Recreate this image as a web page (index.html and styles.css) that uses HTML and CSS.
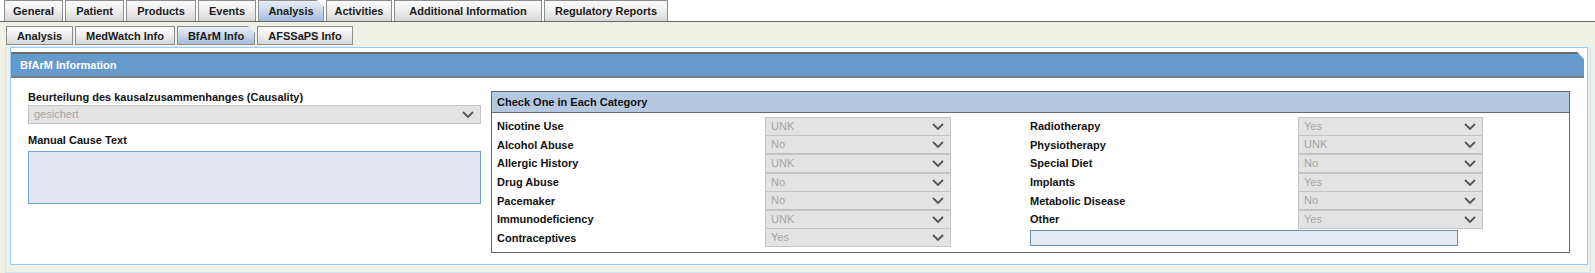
FILE: index.html
```html
<!DOCTYPE html>
<html>
<head>
<meta charset="utf-8">
<link rel="stylesheet" href="styles.css">
</head>
<body>
<div class="tabs1">
  <div class="tab">General</div>
  <div class="tab">Patient</div>
  <div class="tab">Products</div>
  <div class="tab">Events</div>
  <div class="tab sel">Analysis</div>
  <div class="tab">Activities</div>
  <div class="tab">Additional Information</div>
  <div class="tab">Regulatory Reports</div>
</div>
<div class="frame">
  <div class="tabs2">
    <div class="tab">Analysis</div>
    <div class="tab">MedWatch Info</div>
    <div class="tab sel">BfArM Info</div>
    <div class="tab">AFSSaPS Info</div>
  </div>
  <div class="outer">
    <div class="panel">
      <div class="phead">BfArM Information</div>
      <div class="pbody">
        <div class="left">
          <div class="lbl">Beurteilung des kausalzusammenhanges (Causality)</div>
          <div class="sel-box wide"><span>gesichert</span><svg class="chev" width="12" height="8" viewBox="0 0 12 8"><path d="M1 1 L6 6 L11 1" fill="none" stroke="#555" stroke-width="1.8"/></svg></div>
          <div class="lbl lbl2">Manual Cause Text</div>
          <div class="textarea"></div>
        </div>
        <div class="box">
          <div class="bhead">Check One in Each Category</div>
          <div class="bbody">
            <div class="col">
              <div class="row"><div class="rl">Nicotine Use</div><div class="sel-box"><span>UNK</span><svg class="chev" width="12" height="8" viewBox="0 0 12 8"><path d="M1 1 L6 6 L11 1" fill="none" stroke="#555" stroke-width="1.8"/></svg></div></div>
              <div class="row"><div class="rl">Alcohol Abuse</div><div class="sel-box"><span>No</span><svg class="chev" width="12" height="8" viewBox="0 0 12 8"><path d="M1 1 L6 6 L11 1" fill="none" stroke="#555" stroke-width="1.8"/></svg></div></div>
              <div class="row"><div class="rl">Allergic History</div><div class="sel-box"><span>UNK</span><svg class="chev" width="12" height="8" viewBox="0 0 12 8"><path d="M1 1 L6 6 L11 1" fill="none" stroke="#555" stroke-width="1.8"/></svg></div></div>
              <div class="row"><div class="rl">Drug Abuse</div><div class="sel-box"><span>No</span><svg class="chev" width="12" height="8" viewBox="0 0 12 8"><path d="M1 1 L6 6 L11 1" fill="none" stroke="#555" stroke-width="1.8"/></svg></div></div>
              <div class="row"><div class="rl">Pacemaker</div><div class="sel-box"><span>No</span><svg class="chev" width="12" height="8" viewBox="0 0 12 8"><path d="M1 1 L6 6 L11 1" fill="none" stroke="#555" stroke-width="1.8"/></svg></div></div>
              <div class="row"><div class="rl">Immunodeficiency</div><div class="sel-box"><span>UNK</span><svg class="chev" width="12" height="8" viewBox="0 0 12 8"><path d="M1 1 L6 6 L11 1" fill="none" stroke="#555" stroke-width="1.8"/></svg></div></div>
              <div class="row"><div class="rl">Contraceptives</div><div class="sel-box"><span>Yes</span><svg class="chev" width="12" height="8" viewBox="0 0 12 8"><path d="M1 1 L6 6 L11 1" fill="none" stroke="#555" stroke-width="1.8"/></svg></div></div>
            </div>
            <div class="col col2">
              <div class="row"><div class="rl">Radiotherapy</div><div class="sel-box"><span>Yes</span><svg class="chev" width="12" height="8" viewBox="0 0 12 8"><path d="M1 1 L6 6 L11 1" fill="none" stroke="#555" stroke-width="1.8"/></svg></div></div>
              <div class="row"><div class="rl">Physiotherapy</div><div class="sel-box"><span>UNK</span><svg class="chev" width="12" height="8" viewBox="0 0 12 8"><path d="M1 1 L6 6 L11 1" fill="none" stroke="#555" stroke-width="1.8"/></svg></div></div>
              <div class="row"><div class="rl">Special Diet</div><div class="sel-box"><span>No</span><svg class="chev" width="12" height="8" viewBox="0 0 12 8"><path d="M1 1 L6 6 L11 1" fill="none" stroke="#555" stroke-width="1.8"/></svg></div></div>
              <div class="row"><div class="rl">Implants</div><div class="sel-box"><span>Yes</span><svg class="chev" width="12" height="8" viewBox="0 0 12 8"><path d="M1 1 L6 6 L11 1" fill="none" stroke="#555" stroke-width="1.8"/></svg></div></div>
              <div class="row"><div class="rl">Metabolic Disease</div><div class="sel-box"><span>No</span><svg class="chev" width="12" height="8" viewBox="0 0 12 8"><path d="M1 1 L6 6 L11 1" fill="none" stroke="#555" stroke-width="1.8"/></svg></div></div>
              <div class="row"><div class="rl">Other</div><div class="sel-box"><span>Yes</span><svg class="chev" width="12" height="8" viewBox="0 0 12 8"><path d="M1 1 L6 6 L11 1" fill="none" stroke="#555" stroke-width="1.8"/></svg></div></div>
              <div class="row"><div class="other-input"></div></div>
            </div>
          </div>
        </div>
      </div>
    </div>
  </div>
</div>
</body>
</html>
```

FILE: styles.css
```css
* { box-sizing: border-box; }
html, body { margin: 0; padding: 0; background: #fff; }
body {
  font-family: "Liberation Sans", Arial, sans-serif;
  font-size: 11px;
  color: #111;
  width: 1595px;
  height: 273px;
  overflow: hidden;
}
.tabs1 {
  display: flex;
  gap: 2px;
  padding-left: 4px;
  height: 21px;
  align-items: flex-end;
}
.tab {
  position: relative;
  height: 21px;
  padding: 0;
  border: 1px solid #8e8e8e;
  border-bottom: none;
  background: linear-gradient(#fbfbfb, #f0f0f0 45%, #d6d6d6);
  font-weight: bold;
  line-height: 20px;
  text-align: center;
  white-space: nowrap;
  color: #1b1b1b;
}
.tab.sel {
  background: linear-gradient(#e8eef6, #c9d7ea 50%, #a5bcdc);
  clip-path: polygon(0 0, calc(100% - 7px) 0, 100% 7px, 100% 100%, 0 100%);
}
.tabs1 .tab:nth-child(1) { width: 59px; }
.tabs1 .tab:nth-child(2) { width: 59px; }
.tabs1 .tab:nth-child(3) { width: 70px; }
.tabs1 .tab:nth-child(4) { width: 58px; }
.tabs1 .tab:nth-child(5) { width: 66px; }
.tabs1 .tab:nth-child(6) { width: 66px; }
.tabs1 .tab:nth-child(7) { width: 148px; }
.tabs1 .tab:nth-child(8) { width: 124px; }
.frame {
  border-top: 1px solid #686868;
  background: #eff1e6;
  height: 252px;
  padding-top: 4px;
}
.tabs2 {
  display: flex;
  gap: 2px;
  padding-left: 6px;
  height: 19px;
}
.tabs2 .tab { height: 19px; line-height: 18px; border-bottom: 1px solid #8e8e8e; }
.tabs2 .tab:nth-child(1) { width: 67px; }
.tabs2 .tab:nth-child(2) { width: 100px; }
.tabs2 .tab:nth-child(3) { width: 78px; }
.tabs2 .tab:nth-child(4) { width: 96px; }
.outer {
  margin: 2px 4px 0 5px;
  border: 1px solid #cfe3f3;
  border-top: none;
  padding: 0 2px 4px 4px;
  height: 226px;
}
.panel {
  border: 1px solid #99ccff;
  background: #fff;
  height: 218px;
  padding-top: 4px;
}
.phead {
  height: 26px;
  border-top: 2px solid #6c6c6c;
  border-bottom: 2px solid #7a7a7a;
  border-left: 1px solid #8a8a8a;
  margin-right: 3px;
  background: #6699cc;
  color: #fff;
  font-weight: bold;
  font-size: 11px;
  line-height: 22px;
  padding-left: 8px;
  clip-path: polygon(0 0, calc(100% - 7px) 0, 100% 7px, 100% 100%, 0 100%);
}
.pbody {
  display: flex;
  gap: 10px;
  padding: 12px 0 0 17px;
}
.left { width: 453px; }
.lbl { font-weight: bold; height: 15px; line-height: 14px; }
.lbl2 { margin-top: 9px; height: 13px; }
.sel-box {
  position: relative;
  height: 19px;
  border: 1px solid #c4c4c4;
  background: #e3e3e3;
  color: #a5a5a5;
  line-height: 17px;
  padding-left: 5px;
}
.sel-box .chev { position: absolute; right: 6px; top: 5px; }
.textarea {
  margin-top: 5px;
  height: 53px;
  border: 1px solid #73a0d6;
  background: #e6e7f1;
}
.box {
  width: 1079px;
  height: 162px;
  border: 1px solid #666;
  margin-top: 1px;
}
.bhead {
  height: 21px;
  background: #b4c8e2;
  border-bottom: 1px solid #6a6a6a;
  font-weight: bold;
  line-height: 20px;
  padding-left: 5px;
}
.bbody {
  display: flex;
  padding: 4px 0 0 5px;
}
.col { width: 533px; }
.col2 { width: 520px; }
.row { display: flex; height: 18.6px; align-items: center; }
.rl { font-weight: bold; width: 268px; }
.col .sel-box { width: 186px; height: 19px; }
.col2 .sel-box { width: 185px; }
.other-input {
  width: 428px;
  height: 16px;
  border: 1px solid #6d8fbd;
  background: #e6eaf4;
}
```
